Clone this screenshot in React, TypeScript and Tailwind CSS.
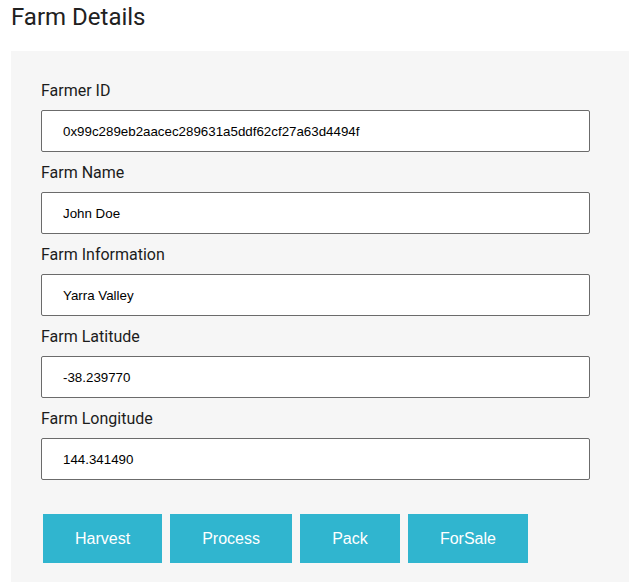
import { useState } from "react";

const fields = [
  { label: "Farmer ID", value: "0x99c289eb2aacec289631a5ddf62cf27a63d4494f" },
  { label: "Farm Name", value: "John Doe" },
  { label: "Farm Information", value: "Yarra Valley" },
  { label: "Farm Latitude", value: "-38.239770" },
  { label: "Farm Longitude", value: "144.341490" },
];

const actions = ["Harvest", "Process", "Pack", "ForSale"];

export default function App() {
  const [values, setValues] = useState(fields.map((f) => f.value));

  return (
    <div className="min-h-screen bg-white font-['Roboto',sans-serif] text-[#212121]">
      <h1 className="pl-[11px] pt-[3px] text-[24px] leading-[28px] font-normal">
        Farm Details
      </h1>
      <div className="mt-[20px] ml-[11px] bg-[#f6f6f6] pl-[30px] pr-[39px] pt-[27px] pb-[40px]">
        {fields.map((f, i) => (
          <div key={f.label} className="mb-[8px]">
            <label className="block text-[16px] leading-[24px] pt-[1px] mb-[7px] text-[#1c1c1c]">
              {f.label}
            </label>
            <input
              type="text"
              value={values[i]}
              onChange={(e) => {
                const next = [...values];
                next[i] = e.target.value;
                setValues(next);
              }}
              className="block w-full h-[42px] border border-[#6b6b6b] rounded-[2px] bg-white px-[21px] font-['Liberation_Sans',Arial,sans-serif] text-[13.33px] text-black outline-none"
            />
          </div>
        ))}
        {/* 操作按钮 */}
        <div className="flex gap-[8px] pt-[26px] pl-[2px]">
          {actions.map((a) => (
            <button
              key={a}
              type="button"
              className="h-[49px] min-w-[100px] px-[32px] bg-[#30b5cf] text-white font-['Liberation_Sans',Arial,sans-serif] text-[16px]"
            >
              {a}
            </button>
          ))}
        </div>
      </div>
    </div>
  );
}
